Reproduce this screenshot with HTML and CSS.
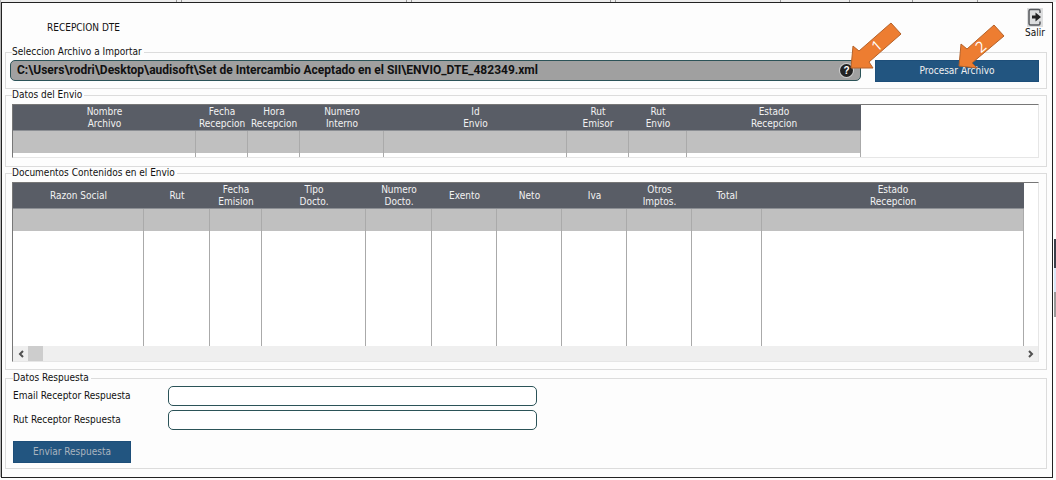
FILE: index.html
```html
<!DOCTYPE html>
<html lang="es">
<head>
<meta charset="utf-8">
<title>Recepcion DTE</title>
<link rel="stylesheet" href="styles.css">
</head>
<body>
<main class="window">
  <header class="topbar">
    <h1 class="title">RECEPCION DTE</h1>
    <button class="exit" type="button">
      <svg width="16" height="19" viewBox="0 0 16 19" aria-hidden="true">
        <rect width="16" height="19" fill="#dddedf"/>
        <path d="M13 5V3Q13 1.500 11.500 1.500H3.500Q2 1.500 2 3V15.500Q2 17 3.500 17H11.500Q13 17 13 15.500V13.500" fill="none" stroke="#55585c" stroke-width="1.500"/>
        <path d="M5 7.500H8.500V4.500L14 9L8.500 13.500V10.500H5Z" fill="#222"/>
      </svg>
      <span>Salir</span>
    </button>
  </header>

  <fieldset class="group">
    <legend>Seleccion Archivo a Importar</legend>
    <div class="file-row">
      <div class="file-box">
        <input class="file-input" type="text" aria-label="Archivo a importar" value="C:\Users\rodri\Desktop\audisoft\Set de Intercambio Aceptado en el SII\ENVIO_DTE_482349.xml">
        <button class="help" type="button" aria-label="Ayuda">?</button>
      </div>
      <button class="action process" type="button">Procesar Archivo</button>
    </div>
  </fieldset>

  <fieldset class="group">
    <legend>Datos del Envio</legend>
    <div class="sheet">
      <table class="grid">
        <colgroup><col class="w183"><col class="w52"><col class="w52"><col class="w84"><col class="w183"><col class="w62"><col class="w58"><col class="w174"></colgroup>
        <thead><tr><th>Nombre<br>Archivo</th><th>Fecha<br>Recepcion</th><th>Hora<br>Recepcion</th><th>Numero<br>Interno</th><th>Id<br>Envio</th><th>Rut<br>Emisor</th><th>Rut<br>Envio</th><th>Estado<br>Recepcion</th></tr></thead>
        <tbody>
          <tr class="current"><td></td><td></td><td></td><td></td><td></td><td></td><td></td><td></td></tr>
          <tr class="rest-short"><td></td><td></td><td></td><td></td><td></td><td></td><td></td><td></td></tr>
        </tbody>
      </table>
    </div>
  </fieldset>

  <fieldset class="group documents">
    <legend>Documentos Contenidos en el Envio</legend>
    <div class="sheet">
      <table class="grid">
        <colgroup><col class="w131"><col class="w66"><col class="w52"><col class="w104"><col class="w66"><col class="w65"><col class="w65"><col class="w65"><col class="w65"><col class="w70"><col class="w262"></colgroup>
        <thead><tr><th>Razon Social</th><th>Rut</th><th>Fecha<br>Emision</th><th>Tipo<br>Docto.</th><th>Numero<br>Docto.</th><th>Exento</th><th>Neto</th><th>Iva</th><th>Otros<br>Imptos.</th><th>Total</th><th>Estado<br>Recepcion</th></tr></thead>
        <tbody>
          <tr class="current"><td></td><td></td><td></td><td></td><td></td><td></td><td></td><td></td><td></td><td></td><td></td></tr>
          <tr class="rest-tall"><td></td><td></td><td></td><td></td><td></td><td></td><td></td><td></td><td></td><td></td><td></td></tr>
        </tbody>
      </table>
      <div class="scroll">
        <button class="arrow" type="button" aria-label="Izquierda"><svg width="8" height="8" viewBox="0 0 8 8"><path d="M6 1L3 4L6 7" fill="none" stroke="#505050" stroke-width="2"/></svg></button>
        <div class="thumb"></div>
        <button class="arrow arrow-end" type="button" aria-label="Derecha"><svg width="8" height="8" viewBox="0 0 8 8"><path d="M2 1L5 4L2 7" fill="none" stroke="#505050" stroke-width="2"/></svg></button>
      </div>
    </div>
  </fieldset>

  <fieldset class="group answer">
    <legend>Datos Respuesta</legend>
    <div class="fields">
      <label for="email">Email Receptor Respuesta</label>
      <input class="field" id="email" type="text">
      <label for="rut">Rut Receptor Respuesta</label>
      <input class="field" id="rut" type="text">
    </div>
    <button class="action send" type="button">Enviar Respuesta</button>
  </fieldset>

  <svg class="callouts" width="160" height="52" viewBox="0 0 160 52">
    <g fill="#ed7d31" stroke="#b5622a" stroke-width="1">
      <path d="M4 48L6 26L12 31L44 3L54 14L22 42L26 48Z"/>
      <path d="M112 46L114 24L120 29L147 5L157 16L125 43L130 48Z"/>
    </g>
    <g class="callout-text">
      <text transform="translate(30 26) rotate(-41)" y="5" text-anchor="middle">1</text>
      <text transform="translate(134 27) rotate(-41)" y="5" text-anchor="middle">2</text>
    </g>
  </svg>
</main>
<div class="behind"></div>
</body>
</html>
```
FILE: styles.css
```css
* { box-sizing: border-box; }

body {
  margin: 0;
  padding: 2px 3px 3px 1px;
  background:
    linear-gradient(90deg, transparent 176px, #999 176px, #999 177px, transparent 177px, transparent 181px, #999 181px, #999 182px, transparent 182px,
      transparent 406px, #999 406px, #999 407px, transparent 407px, transparent 411px, #999 411px, #999 412px, transparent 412px,
      transparent 610px, #999 610px, #999 611px, transparent 611px, transparent 615px, #999 615px, #999 616px, transparent 616px,
      transparent 780px, #999 780px, #999 781px, transparent 781px, transparent 849px, #999 849px, #999 850px, transparent 850px,
      transparent 912px, #999 912px, #999 913px, transparent 913px, transparent 977px, #999 977px, #999 978px, transparent 978px) 0 0 / 100% 2px no-repeat,
    linear-gradient(#b5b5b5, #b5b5b5) 0 0 / 1px 477px no-repeat,
    linear-gradient(#ececec, #ececec) 0 0 / 100% 2px no-repeat,
    #fdfdfd;
  color: #111;
  font: 10px/12px "DejaVu Sans Condensed", "DejaVu Sans", sans-serif;
}

button, input { font: inherit; margin: 0; }

.window {
  position: relative;
  border: 1px solid #222;
  background: #fdfdfd;
  padding: 0 5px 8px 3px;
}

.topbar {
  display: flex;
  justify-content: space-between;
  align-items: flex-start;
  height: 43px;
  padding: 5px 2px 0 42px;
}

.title { margin: 14px 0 0; font-size: 10px; font-weight: 400; }

.exit {
  display: flex;
  flex-direction: column;
  align-items: center;
  padding: 0;
  border: 0;
  background: none;
  color: #111;
}

.group {
  min-width: 0;
  margin: 0;
  padding: 3px 7px 8px 6px;
  border: 1px solid #dcdcdc;
}

.group legend { padding: 0 2px 0 0; height: 12px; }

.file-row { display: flex; gap: 14px; margin: -1px 0 -2px -2px; }

.file-box {
  display: flex;
  align-items: center;
  flex: 1;
  height: 21px;
  padding: 0 7px 0 6px;
  border: 1px solid #2b5358;
  border-radius: 5px;
  background: #a0a0a0;
}

.file-input {
  flex: 1;
  min-width: 0;
  padding: 0 0 2px;
  border: 0;
  background: none;
  color: #111;
  font: bold 12px/16px Roboto, "Liberation Sans", sans-serif;
}

.help {
  width: 13px;
  height: 13px;
  padding: 0;
  border: 0;
  border-radius: 50%;
  background: #222;
  box-shadow: 0 0 0 1px #ccc;
  color: #fff;
  font: bold 10px/13px "Liberation Sans", Arial, sans-serif;
}

.action {
  height: 22px;
  padding: 0;
  border: 1px solid #1d4e79;
  background: #225580;
  color: #f0f0f0;
}

.process { width: 164px; }

.sheet {
  overflow: hidden;
  border: 1px solid #e6e6e6;
  border-top-color: #777;
  border-left-color: #777;
  background: #fff;
}

.grid { width: 0; table-layout: fixed; border-collapse: separate; border-spacing: 0; }
.grid th {
  height: 26px;
  padding: 1px 0 0;
  border-bottom: 1px solid #8c8f94;
  background: #595d66;
  color: #f2f2f2;
  font-weight: 400;
}
.grid td { padding: 0; border-right: 1px solid #aaa; }
.current td { height: 22px; background: #c0c0c0; }
.rest-short td { height: 4px; }
.rest-tall td { height: 115px; }

.w52 { width: 52px; }
.w58 { width: 58px; }
.w62 { width: 62px; }
.w65 { width: 65px; }
.w66 { width: 66px; }
.w70 { width: 70px; }
.w84 { width: 84px; }
.w104 { width: 104px; }
.w131 { width: 131px; }
.w174 { width: 174px; }
.w183 { width: 183px; }
.w262 { width: 262px; }

.scroll { display: flex; height: 15px; background: #efefef; }
.arrow {
  display: flex;
  align-items: center;
  justify-content: center;
  width: 15px;
  padding: 0;
  border: 0;
  background: none;
}
.arrow-end { margin-left: auto; }
.thumb { width: 15px; background: #cdcdcd; }

.documents { padding-bottom: 7px; }
.answer { margin-top: 2px; padding: 2px 8px 5px 7px; }

.fields {
  display: grid;
  grid-template-columns: 155px 369px;
  row-gap: 4px;
  align-items: center;
}

.field {
  width: 100%;
  height: 20px;
  padding: 0 6px;
  border: 1px solid #2b5358;
  border-radius: 5px;
  background: #fff;
}

.send { width: 118px; margin-top: 11px; color: #a9b4bf; display: block; }

.callouts { position: absolute; top: 17px; right: 45px; pointer-events: none; }
.callout-text { fill: #fff; font: 15px "Open Sans", sans-serif; }

.behind {
  position: absolute;
  top: 239px;
  right: 0;
  width: 2px;
  height: 78px;
  background: linear-gradient(#3b3f4a 29px, #d9e6f7 29px, #d9e6f7 53px, #999 53px);
}
```
